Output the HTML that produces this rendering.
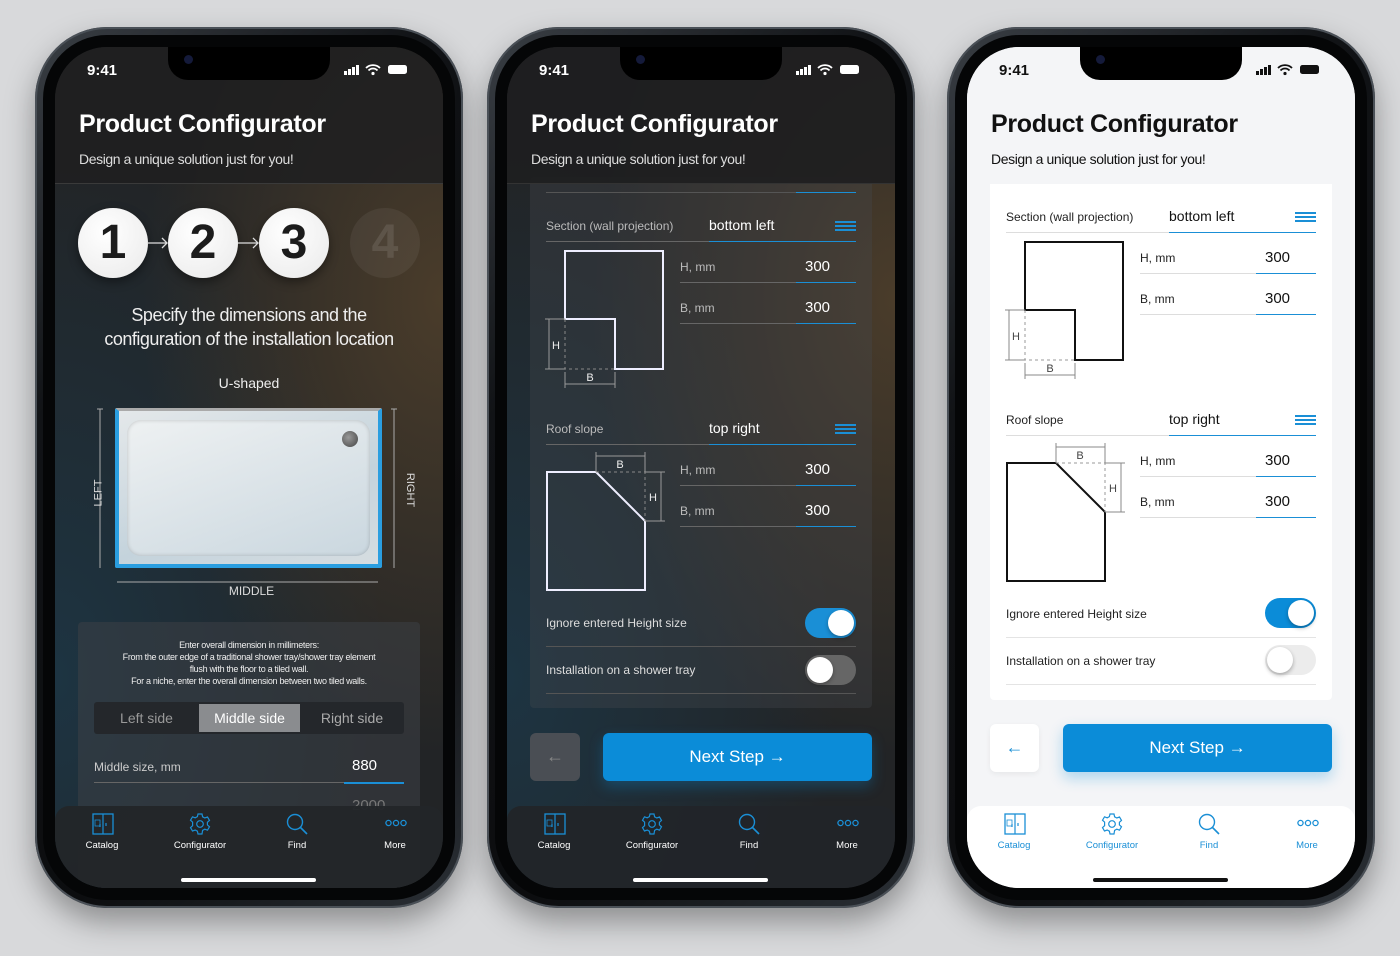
<!DOCTYPE html>
<html><head><meta charset="utf-8">
<style>
*{box-sizing:border-box;margin:0;padding:0}
body{width:1400px;height:956px;background:#d8d9db;font-family:"Liberation Sans",sans-serif;position:relative;overflow:hidden}
.ph{position:absolute;top:27px;width:428px;height:881px;border-radius:72px;background:linear-gradient(135deg,#3a3f45,#111316 30%,#0c0d0f 70%,#2b3036);box-shadow:0 14px 30px rgba(0,0,0,.35),inset 0 0 0 2px #4a5057}
.ph:before{content:"";position:absolute;left:8px;top:8px;right:8px;bottom:8px;border-radius:64px;background:#050607}
.scr{position:absolute;left:20px;top:20px;width:388px;height:841px;border-radius:52px;overflow:hidden}
.dark{background:radial-gradient(ellipse at 100% 30%,#4a3c2a 0%,rgba(60,50,40,0) 55%),radial-gradient(ellipse at 0% 75%,#1d3442 0%,rgba(20,40,55,0) 60%),#222426}
.light{background:#f4f5f7}
.abs{position:absolute}
.notch{position:absolute;left:113px;top:0;width:162px;height:33px;background:#000;border-radius:0 0 20px 20px}
.notch:after{content:"";position:absolute;left:16px;top:8px;width:9px;height:9px;border-radius:50%;background:#141a3a}
.time{position:absolute;left:32px;top:15px;font-size:15px;font-weight:bold}
.hdr{position:absolute;left:0;top:0;width:388px;height:137px}
.title{position:absolute;left:24px;top:63px;font-size:25px;font-weight:bold;letter-spacing:-0.3px}
.sub{position:absolute;left:24px;top:104px;font-size:14px;letter-spacing:-0.4px}
.t{position:absolute;white-space:nowrap}
.ln{position:absolute;height:1px}
.tab{position:absolute;left:0;top:759px;width:388px;height:90px;border-radius:14px 14px 0 0}
.tab .lb{position:absolute;top:34px;font-size:9.5px;width:80px;margin-left:-40px;text-align:center}
.tab svg{position:absolute;top:7px}
.home{position:absolute;left:126px;top:831px;width:135px;height:4px;border-radius:3px}
.circ{position:absolute;top:161px;width:70px;height:70px;border-radius:50%;background:radial-gradient(circle at 40% 35%,#fff,#e9e9e9);color:#1c1c1c;font-size:48px;font-weight:bold;text-align:center;line-height:70px;box-shadow:0 4px 10px rgba(0,0,0,.4)}
.tog{position:absolute;width:51px;height:30px;border-radius:15px}
.tog i{position:absolute;top:2px;width:26px;height:26px;border-radius:50%;background:#fff;box-shadow:0 2px 4px rgba(0,0,0,.3)}
.btn{position:absolute;top:686px;height:48px;border-radius:6px}
.nb{left:96px;width:269px;background:#0b8cd8;color:#fff;font-size:17px;text-align:center;line-height:48px;box-shadow:0 6px 14px rgba(11,140,216,.3)}
.hb{position:absolute;width:21px;height:10px;border-top:2px solid #1a8fd6;border-bottom:2px solid #1a8fd6}
.hb:after{content:"";position:absolute;left:0;right:0;top:2px;height:2px;background:#1a8fd6}
</style></head><body>

<!-- PHONE 1 -->
<div class="ph" style="left:35px"><div class="scr dark" style="color:#fff">
<div class="hdr" style="background:rgba(30,30,32,.85);border-bottom:1px solid #3a3a3a"></div>
<div class="notch"></div>
<div class="time">9:41</div>
<svg class="abs" style="left:289px;top:17px" width="66" height="12"><rect x="0" y="7" width="3" height="4" fill="#fff"/><rect x="4" y="5" width="3" height="6" fill="#fff"/><rect x="8" y="3" width="3" height="8" fill="#fff"/><rect x="12" y="1" width="3" height="10" fill="#fff"/><path d="M22 4a10 10 0 0 1 14 0M24.5 6.5a6 6 0 0 1 9 0" stroke="#fff" stroke-width="1.8" fill="none"/><circle cx="29" cy="9.5" r="1.6" fill="#fff"/><rect x="44" y="1" width="19" height="9" rx="2.5" fill="#fff"/></svg>
<div class="title">Product Configurator</div>
<div class="sub" style="color:#ddd">Design a unique solution just for you!</div>
<div class="circ" style="left:23px">1</div>
<div class="circ" style="left:113px">2</div>
<div class="circ" style="left:204px">3</div>
<div class="circ" style="left:295px;background:rgba(255,255,255,.06);color:rgba(255,255,255,.1);box-shadow:none">4</div>
<svg class="abs" style="left:92px;top:188px" width="130" height="16"><path d="M0 8H20M15 3l5 5-5 5M91 8H111M106 3l5 5-5 5" stroke="#ddd" stroke-width="1.3" fill="none"/></svg>
<div class="t" style="left:0;width:388px;text-align:center;top:256px;font-size:18px;line-height:24px;font-weight:300;color:#eee;letter-spacing:-0.5px">Specify the dimensions and the<br>configuration of the installation location</div>
<div class="t" style="left:0;width:388px;text-align:center;top:328px;font-size:14px;color:#eee">U-shaped</div>
<div class="abs" style="left:60px;top:361px;width:267px;height:160px;background:linear-gradient(160deg,#e4e8ea,#c4d3dc 60%,#d6dde1);border:4px solid #2a9ee0;border-top:3px solid #aaa;border-radius:2px"></div>
<div class="abs" style="left:72px;top:373px;width:243px;height:136px;border-radius:14px;background:linear-gradient(160deg,#eef1f2,#cad7df);box-shadow:inset 0 0 4px rgba(0,0,0,.2)"></div>
<div class="abs" style="left:287px;top:384px;width:16px;height:16px;border-radius:50%;background:radial-gradient(circle at 40% 40%,#999,#444)"></div>
<svg class="abs" style="left:38px;top:358px" width="320" height="190"><path d="M7 4V163M301 4V163M24 177H285" stroke="#aaa" stroke-width="1" fill="none"/><path d="M4 4H10M298 4H304" stroke="#aaa"/></svg>
<div class="t" style="left:30px;top:440px;font-size:11px;transform:rotate(-90deg);color:#ddd">LEFT</div>
<div class="t" style="left:338px;top:437px;font-size:11px;transform:rotate(90deg);color:#ddd">RIGHT</div>
<div class="t" style="left:0;width:393px;text-align:center;top:537px;font-size:12px;color:#ddd">MIDDLE</div>
<div class="abs" style="left:23px;top:575px;width:342px;height:300px;background:rgba(60,64,70,.55);border-radius:4px"></div>
<div class="t" style="left:23px;width:342px;text-align:center;top:592px;font-size:9px;line-height:12px;color:#eee;letter-spacing:-0.3px">Enter overall dimension in millimeters:<br>From the outer edge of a traditional shower tray/shower tray element<br>flush with the floor to a tiled wall.<br>For a niche, enter the overall dimension between two tiled walls.</div>
<div class="abs" style="left:39px;top:655px;width:310px;height:32px;background:#24272b;border-radius:3px"></div>
<div class="abs" style="left:144px;top:657px;width:101px;height:28px;background:#8a8c8f"></div>
<div class="t" style="left:39px;width:105px;text-align:center;top:663px;font-size:14px;color:#999">Left side</div>
<div class="t" style="left:144px;width:101px;text-align:center;top:663px;font-size:14px;color:#fff">Middle side</div>
<div class="t" style="left:245px;width:104px;text-align:center;top:663px;font-size:14px;color:#aaa">Right side</div>
<div class="t" style="left:39px;top:713px;font-size:12px;color:#ccc">Middle size, mm</div>
<div class="t" style="left:297px;top:710px;font-size:15px;color:#fff">880</div>
<div class="ln" style="left:39px;top:735px;width:310px;background:#666"></div>
<div class="ln" style="left:289px;top:735px;width:60px;background:#1a8fd6;height:2px"></div>
<div class="t" style="left:297px;top:750px;font-size:15px;color:#777">2000</div>
<div class="tab" style="background:rgba(34,37,41,.96)">
<svg style="left:37px" width="22" height="22"><rect x="1" y="1" width="20" height="20" fill="none" stroke="#1a8fd6" stroke-width="1.3"/><path d="M11 1V21M8 11v3M14 10v3" stroke="#1a8fd6" stroke-width="1.2"/><rect x="3" y="7" width="5" height="6" fill="none" stroke="#1a8fd6" stroke-width=".8"/></svg>
<svg style="left:134px" width="22" height="22" viewBox="0 0 22 22"><path d="M9 1h4l.6 2.8 2.2 1.2 2.7-1 2 3.4-2.1 1.9v2.6l2.1 1.9-2 3.4-2.7-1-2.2 1.2L13 21H9l-.6-2.8-2.2-1.2-2.7 1-2-3.4 2.1-1.9V9.1L1.5 7.2l2-3.4 2.7 1 2.2-1.2z" fill="none" stroke="#1a8fd6" stroke-width="1.2"/><circle cx="11" cy="11" r="3.3" fill="none" stroke="#1a8fd6" stroke-width="1.2"/></svg>
<svg style="left:231px" width="22" height="22"><circle cx="9" cy="9" r="7.5" fill="none" stroke="#1a8fd6" stroke-width="1.4"/><path d="M14.5 14.5L21 21" stroke="#1a8fd6" stroke-width="1.6"/></svg>
<svg style="left:330px;top:13px" width="22" height="8"><circle cx="3.5" cy="4" r="2.6" fill="none" stroke="#1a8fd6" stroke-width="1.3"/><circle cx="11" cy="4" r="2.6" fill="none" stroke="#1a8fd6" stroke-width="1.3"/><circle cx="18.5" cy="4" r="2.6" fill="none" stroke="#1a8fd6" stroke-width="1.3"/></svg>
<div class="lb" style="left:47px;color:#fff">Catalog</div><div class="lb" style="left:145px;color:#fff">Configurator</div><div class="lb" style="left:242px;color:#fff">Find</div><div class="lb" style="left:340px;color:#fff">More</div>
</div>
<div class="home" style="background:#fff"></div>
</div></div>

<!-- PHONE 2 -->
<div class="ph" style="left:487px"><div class="scr dark" style="color:#fff">
<div class="abs" style="left:23px;top:130px;width:342px;height:531px;background:rgba(70,72,76,.35);border-radius:4px"></div>
<div class="ln" style="left:39px;top:145px;width:310px;background:#555"></div>
<div class="ln" style="left:289px;top:145px;width:60px;background:#1a8fd6"></div>
<div class="hdr" style="background:rgba(30,30,32,.92);border-bottom:1px solid #333"></div>
<div class="notch"></div>
<div class="time">9:41</div>
<svg class="abs" style="left:289px;top:17px" width="66" height="12"><rect x="0" y="7" width="3" height="4" fill="#fff"/><rect x="4" y="5" width="3" height="6" fill="#fff"/><rect x="8" y="3" width="3" height="8" fill="#fff"/><rect x="12" y="1" width="3" height="10" fill="#fff"/><path d="M22 4a10 10 0 0 1 14 0M24.5 6.5a6 6 0 0 1 9 0" stroke="#fff" stroke-width="1.8" fill="none"/><circle cx="29" cy="9.5" r="1.6" fill="#fff"/><rect x="44" y="1" width="19" height="9" rx="2.5" fill="#fff"/></svg>
<div class="title">Product Configurator</div>
<div class="sub" style="color:#ddd">Design a unique solution just for you!</div>

<div class="t" style="left:39px;top:172px;font-size:12px;color:#bbb">Section (wall projection)</div>
<div class="t" style="left:202px;top:170px;font-size:14px;color:#fff">bottom left</div>
<div class="hb" style="left:328px;top:174px"></div>
<div class="ln" style="left:39px;top:194px;width:310px;background:#666"></div>
<div class="ln" style="left:202px;top:194px;width:147px;background:#1a8fd6"></div>
<svg class="abs" style="left:30px;top:195px" width="140" height="150"><path d="M28 9H126V127H78V77H28Z" fill="none" stroke="#eef" stroke-width="2"/><path d="M28 77V127H78" fill="none" stroke="#888" stroke-dasharray="3 3"/><path d="M12 77V127M28 142H78M8 77H28M8 127H28M78 130V146M28 130V146" stroke="#999" fill="none"/><text x="15" y="107" fill="#eee" font-size="11" font-family="Liberation Sans">H</text><text x="53" y="139" fill="#eee" font-size="11" font-family="Liberation Sans" text-anchor="middle">B</text></svg>
<div class="t" style="left:173px;top:213px;font-size:12px;color:#bbb">H, mm</div><div class="t" style="left:298px;top:211px;font-size:15px">300</div>
<div class="ln" style="left:173px;top:235px;width:176px;background:#666"></div><div class="ln" style="left:289px;top:235px;width:60px;background:#1a8fd6"></div>
<div class="t" style="left:173px;top:254px;font-size:12px;color:#bbb">B, mm</div><div class="t" style="left:298px;top:252px;font-size:15px">300</div>
<div class="ln" style="left:173px;top:276px;width:176px;background:#666"></div><div class="ln" style="left:289px;top:276px;width:60px;background:#1a8fd6"></div>

<div class="t" style="left:39px;top:375px;font-size:12px;color:#bbb">Roof slope</div>
<div class="t" style="left:202px;top:373px;font-size:14px;color:#fff">top right</div>
<div class="hb" style="left:328px;top:377px"></div>
<div class="ln" style="left:39px;top:397px;width:310px;background:#666"></div>
<div class="ln" style="left:202px;top:397px;width:147px;background:#1a8fd6"></div>
<svg class="abs" style="left:30px;top:400px" width="140" height="150"><path d="M10 25H59L108 74V143H10Z" fill="none" stroke="#eef" stroke-width="2"/><path d="M59 25H108V74" fill="none" stroke="#888" stroke-dasharray="3 3"/><path d="M59 9H108M59 5V25M108 5V25M124 25V74M108 25H128M108 74H128" stroke="#999" fill="none"/><text x="83" y="21" fill="#eee" font-size="11" font-family="Liberation Sans" text-anchor="middle">B</text><text x="112" y="54" fill="#eee" font-size="11" font-family="Liberation Sans">H</text></svg>
<div class="t" style="left:173px;top:416px;font-size:12px;color:#bbb">H, mm</div><div class="t" style="left:298px;top:414px;font-size:15px">300</div>
<div class="ln" style="left:173px;top:438px;width:176px;background:#666"></div><div class="ln" style="left:289px;top:438px;width:60px;background:#1a8fd6"></div>
<div class="t" style="left:173px;top:457px;font-size:12px;color:#bbb">B, mm</div><div class="t" style="left:298px;top:455px;font-size:15px">300</div>
<div class="ln" style="left:173px;top:479px;width:176px;background:#666"></div><div class="ln" style="left:289px;top:479px;width:60px;background:#1a8fd6"></div>

<div class="t" style="left:39px;top:569px;font-size:12px;color:#ddd">Ignore entered Height size</div>
<div class="tog" style="left:298px;top:561px;background:#1a8fd6"><i style="left:23px"></i></div>
<div class="ln" style="left:39px;top:599px;width:310px;background:#555"></div>
<div class="t" style="left:39px;top:616px;font-size:12px;color:#ddd">Installation on a shower tray</div>
<div class="tog" style="left:298px;top:608px;background:#666"><i style="left:2px"></i></div>
<div class="ln" style="left:39px;top:646px;width:310px;background:#555"></div>
<div class="btn" style="left:23px;width:50px;background:#4a4e54;color:#888;text-align:center;line-height:46px;font-size:18px">←</div>
<div class="btn nb">Next Step →</div>
<div class="tab" style="background:rgba(34,37,41,.98)">
<svg style="left:37px" width="22" height="22"><rect x="1" y="1" width="20" height="20" fill="none" stroke="#1a8fd6" stroke-width="1.3"/><path d="M11 1V21M8 11v3M14 10v3" stroke="#1a8fd6" stroke-width="1.2"/><rect x="3" y="7" width="5" height="6" fill="none" stroke="#1a8fd6" stroke-width=".8"/></svg>
<svg style="left:134px" width="22" height="22" viewBox="0 0 22 22"><path d="M9 1h4l.6 2.8 2.2 1.2 2.7-1 2 3.4-2.1 1.9v2.6l2.1 1.9-2 3.4-2.7-1-2.2 1.2L13 21H9l-.6-2.8-2.2-1.2-2.7 1-2-3.4 2.1-1.9V9.1L1.5 7.2l2-3.4 2.7 1 2.2-1.2z" fill="none" stroke="#1a8fd6" stroke-width="1.2"/><circle cx="11" cy="11" r="3.3" fill="none" stroke="#1a8fd6" stroke-width="1.2"/></svg>
<svg style="left:231px" width="22" height="22"><circle cx="9" cy="9" r="7.5" fill="none" stroke="#1a8fd6" stroke-width="1.4"/><path d="M14.5 14.5L21 21" stroke="#1a8fd6" stroke-width="1.6"/></svg>
<svg style="left:330px;top:13px" width="22" height="8"><circle cx="3.5" cy="4" r="2.6" fill="none" stroke="#1a8fd6" stroke-width="1.3"/><circle cx="11" cy="4" r="2.6" fill="none" stroke="#1a8fd6" stroke-width="1.3"/><circle cx="18.5" cy="4" r="2.6" fill="none" stroke="#1a8fd6" stroke-width="1.3"/></svg>
<div class="lb" style="left:47px;color:#fff">Catalog</div><div class="lb" style="left:145px;color:#fff">Configurator</div><div class="lb" style="left:242px;color:#fff">Find</div><div class="lb" style="left:340px;color:#fff">More</div>
</div>
<div class="home" style="background:#fff"></div>
</div></div>

<!-- PHONE 3 -->
<div class="ph" style="left:947px"><div class="scr light" style="color:#111">
<div class="abs" style="left:23px;top:130px;width:342px;height:523px;background:#fff;border-radius:4px"></div>
<div class="hdr" style="background:#f4f5f7"></div>
<div class="notch"></div>
<div class="time" style="color:#111">9:41</div>
<svg class="abs" style="left:289px;top:17px" width="66" height="12"><rect x="0" y="7" width="3" height="4" fill="#111"/><rect x="4" y="5" width="3" height="6" fill="#111"/><rect x="8" y="3" width="3" height="8" fill="#111"/><rect x="12" y="1" width="3" height="10" fill="#111"/><path d="M22 4a10 10 0 0 1 14 0M24.5 6.5a6 6 0 0 1 9 0" stroke="#111" stroke-width="1.8" fill="none"/><circle cx="29" cy="9.5" r="1.6" fill="#111"/><rect x="44" y="1" width="19" height="9" rx="2.5" fill="#111"/></svg>
<div class="title">Product Configurator</div>
<div class="sub" style="color:#111">Design a unique solution just for you!</div>

<div class="t" style="left:39px;top:163px;font-size:12px;color:#222">Section (wall projection)</div>
<div class="t" style="left:202px;top:161px;font-size:14px">bottom left</div>
<div class="hb" style="left:328px;top:165px"></div>
<div class="ln" style="left:39px;top:185px;width:310px;background:#ddd"></div>
<div class="ln" style="left:202px;top:185px;width:147px;background:#1a8fd6"></div>
<svg class="abs" style="left:30px;top:186px" width="140" height="150"><path d="M28 9H126V127H78V77H28Z" fill="none" stroke="#111" stroke-width="2"/><path d="M28 77V127H78" fill="none" stroke="#999" stroke-dasharray="3 3"/><path d="M12 77V127M28 142H78M8 77H28M8 127H28M78 130V146M28 130V146" stroke="#888" fill="none"/><text x="15" y="107" fill="#444" font-size="11" font-family="Liberation Sans">H</text><text x="53" y="139" fill="#444" font-size="11" font-family="Liberation Sans" text-anchor="middle">B</text></svg>
<div class="t" style="left:173px;top:204px;font-size:12px;color:#222">H, mm</div><div class="t" style="left:298px;top:202px;font-size:15px">300</div>
<div class="ln" style="left:173px;top:226px;width:176px;background:#ddd"></div><div class="ln" style="left:289px;top:226px;width:60px;background:#1a8fd6"></div>
<div class="t" style="left:173px;top:245px;font-size:12px;color:#222">B, mm</div><div class="t" style="left:298px;top:243px;font-size:15px">300</div>
<div class="ln" style="left:173px;top:267px;width:176px;background:#ddd"></div><div class="ln" style="left:289px;top:267px;width:60px;background:#1a8fd6"></div>

<div class="t" style="left:39px;top:366px;font-size:12px;color:#222">Roof slope</div>
<div class="t" style="left:202px;top:364px;font-size:14px">top right</div>
<div class="hb" style="left:328px;top:368px"></div>
<div class="ln" style="left:39px;top:388px;width:310px;background:#ddd"></div>
<div class="ln" style="left:202px;top:388px;width:147px;background:#1a8fd6"></div>
<svg class="abs" style="left:30px;top:391px" width="140" height="150"><path d="M10 25H59L108 74V143H10Z" fill="none" stroke="#111" stroke-width="2"/><path d="M59 25H108V74" fill="none" stroke="#999" stroke-dasharray="3 3"/><path d="M59 9H108M59 5V25M108 5V25M124 25V74M108 25H128M108 74H128" stroke="#888" fill="none"/><text x="83" y="21" fill="#444" font-size="11" font-family="Liberation Sans" text-anchor="middle">B</text><text x="112" y="54" fill="#444" font-size="11" font-family="Liberation Sans">H</text></svg>
<div class="t" style="left:173px;top:407px;font-size:12px;color:#222">H, mm</div><div class="t" style="left:298px;top:405px;font-size:15px">300</div>
<div class="ln" style="left:173px;top:429px;width:176px;background:#ddd"></div><div class="ln" style="left:289px;top:429px;width:60px;background:#1a8fd6"></div>
<div class="t" style="left:173px;top:448px;font-size:12px;color:#222">B, mm</div><div class="t" style="left:298px;top:446px;font-size:15px">300</div>
<div class="ln" style="left:173px;top:470px;width:176px;background:#ddd"></div><div class="ln" style="left:289px;top:470px;width:60px;background:#1a8fd6"></div>

<div class="t" style="left:39px;top:560px;font-size:12px;color:#222">Ignore entered Height size</div>
<div class="tog" style="left:298px;top:551px;background:#0b8cd8"><i style="left:23px"></i></div>
<div class="ln" style="left:39px;top:590px;width:310px;background:#e4e4e4"></div>
<div class="t" style="left:39px;top:607px;font-size:12px;color:#222">Installation on a shower tray</div>
<div class="tog" style="left:298px;top:598px;background:#ececec"><i style="left:2px"></i></div>
<div class="ln" style="left:39px;top:637px;width:310px;background:#e4e4e4"></div>
<div class="btn" style="top:677px;left:23px;width:49px;background:#fff;color:#1a8fd6;text-align:center;line-height:46px;font-size:18px;box-shadow:0 2px 6px rgba(0,0,0,.06)">←</div>
<div class="btn nb" style="top:677px">Next Step →</div>
<div class="tab" style="background:#fff">
<svg style="left:37px" width="22" height="22"><rect x="1" y="1" width="20" height="20" fill="none" stroke="#1a8fd6" stroke-width="1.3"/><path d="M11 1V21M8 11v3M14 10v3" stroke="#1a8fd6" stroke-width="1.2"/><rect x="3" y="7" width="5" height="6" fill="none" stroke="#1a8fd6" stroke-width=".8"/></svg>
<svg style="left:134px" width="22" height="22" viewBox="0 0 22 22"><path d="M9 1h4l.6 2.8 2.2 1.2 2.7-1 2 3.4-2.1 1.9v2.6l2.1 1.9-2 3.4-2.7-1-2.2 1.2L13 21H9l-.6-2.8-2.2-1.2-2.7 1-2-3.4 2.1-1.9V9.1L1.5 7.2l2-3.4 2.7 1 2.2-1.2z" fill="none" stroke="#1a8fd6" stroke-width="1.2"/><circle cx="11" cy="11" r="3.3" fill="none" stroke="#1a8fd6" stroke-width="1.2"/></svg>
<svg style="left:231px" width="22" height="22"><circle cx="9" cy="9" r="7.5" fill="none" stroke="#1a8fd6" stroke-width="1.4"/><path d="M14.5 14.5L21 21" stroke="#1a8fd6" stroke-width="1.6"/></svg>
<svg style="left:330px;top:13px" width="22" height="8"><circle cx="3.5" cy="4" r="2.6" fill="none" stroke="#1a8fd6" stroke-width="1.3"/><circle cx="11" cy="4" r="2.6" fill="none" stroke="#1a8fd6" stroke-width="1.3"/><circle cx="18.5" cy="4" r="2.6" fill="none" stroke="#1a8fd6" stroke-width="1.3"/></svg>
<div class="lb" style="left:47px;color:#1a8fd6">Catalog</div><div class="lb" style="left:145px;color:#1a8fd6">Configurator</div><div class="lb" style="left:242px;color:#1a8fd6">Find</div><div class="lb" style="left:340px;color:#1a8fd6">More</div>
</div>
<div class="home" style="background:#111"></div>
</div></div>
</body></html>
